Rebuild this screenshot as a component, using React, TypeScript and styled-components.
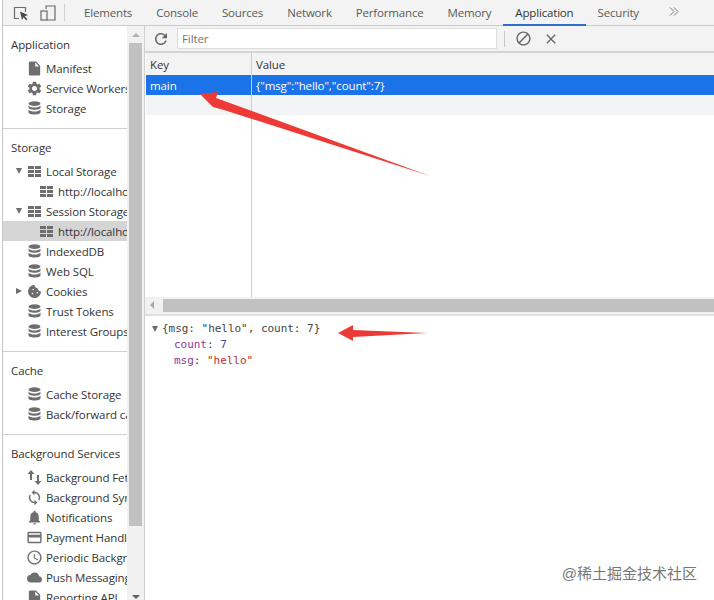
import styled, { createGlobalStyle } from "styled-components";
import type { ReactNode } from "react";
import {
  MdBlock,
  MdClose,
  MdCloud,
  MdCreditCard,
  MdInsertDriveFile,
  MdNotifications,
  MdOutlineAccessTime,
  MdRefresh,
  MdSettings,
  MdSync,
} from "react-icons/md";
import { FaCookieBite } from "react-icons/fa";

const UI_FONT = `"Open Sans", "Noto Sans", sans-serif`;
const MONO_FONT = `"DejaVu Sans Mono", "Liberation Mono", monospace`;

const GlobalStyle = createGlobalStyle`
  html, body {
    margin: 0;
    padding: 0;
    background: #fff;
  }
  * {
    box-sizing: border-box;
  }
`;

const Page = styled.div`
  position: relative;
  width: 714px;
  height: 600px;
  overflow: hidden;
  background: #fff;
  font-family: ${UI_FONT};
  font-size: 11.5px;
  letter-spacing: -0.1px;
  color: #333;
  padding-left: 3px;
  display: flex;
  flex-direction: column;
  &::before {
    content: "";
    position: absolute;
    left: 2px;
    top: 0;
    bottom: 0;
    width: 1px;
    background: #c8c8c8;
  }
`;

const TabBar = styled.div`
  height: 26px;
  flex: none;
  background: #f3f3f3;
  border-bottom: 1px solid #cbcbcb;
  display: flex;
  align-items: stretch;
`;

const TabTools = styled.div`
  width: 62px;
  flex: none;
  margin-right: 7px;
  padding-left: 10px;
  display: flex;
  align-items: center;
  gap: 11px;
  border-right: 1px solid #d0d0d0;
  margin-top: 4px;
  margin-bottom: 4px;
`;

const Tab = styled.div<{ $active?: boolean }>`
  padding: 0 12px;
  line-height: 25px;
  height: 26px;
  letter-spacing: -0.17px;
  color: ${(p) => (p.$active ? "#333" : "#5a5a5a")};
  border-bottom: ${(p) => (p.$active ? "2px solid #2f6fc9" : "none")};
`;

const More = styled.div`
  margin-left: 18px;
  padding-top: 7px;
  display: flex;
  align-items: flex-start;
`;

const Body = styled.div`
  flex: 1;
  min-height: 0;
  display: flex;
`;

const Sidebar = styled.div`
  width: 124px;
  flex: none;
  overflow: hidden;
  background: #fff;
  padding-top: 9px;
`;

const SideSection = styled.div<{ $last?: boolean }>`
  padding-bottom: 10px;
  margin-bottom: 9px;
  border-bottom: ${(p) => (p.$last ? "none" : "1px solid #d0d0d0")};
`;

const SideTitle = styled.div`
  height: 20px;
  line-height: 20px;
  padding-left: 8px;
  margin-bottom: 3px;
  color: #333;
  white-space: nowrap;
`;

const SideRow = styled.div<{ $depth?: number; $selected?: boolean }>`
  height: 20px;
  display: flex;
  align-items: center;
  white-space: nowrap;
  overflow: hidden;
  padding-left: ${(p) => (p.$depth === 1 ? 36 : 24)}px;
  background: ${(p) => (p.$selected ? "#d5d5d5" : "transparent")};
  color: #333;
`;

const Caret = styled.span<{ $open?: boolean }>`
  position: absolute;
  margin-left: -11px;
  width: 0;
  height: 0;
  ${(p) =>
    p.$open
      ? `border-left: 3.5px solid transparent; border-right: 3.5px solid transparent; border-top: 6px solid #6e6e6e;`
      : `border-top: 3.5px solid transparent; border-bottom: 3.5px solid transparent; border-left: 6px solid #6e6e6e;`}
`;

const IconSlot = styled.span`
  width: 14px;
  height: 14px;
  flex: none;
  margin-right: 5px;
  display: flex;
  align-items: center;
  justify-content: center;
  color: #6e6e6e;
  font-size: 17px;
  svg {
    flex: none;
  }
`;

const VScroll = styled.div`
  width: 18px;
  flex: none;
  position: relative;
  background: #f1f1f1;
  border-right: 1px solid #cfcfcf;
  padding: 0 2px;
  display: flex;
  flex-direction: column;
  align-items: center;
`;

const ScrollThumb = styled.div`
  width: 100%;
  height: 483px;
  margin-top: 17px;
  background: #c1c1c1;
`;

const ScrollArrow = styled.span<{ $dir: "up" | "down" | "left" }>`
  position: absolute;
  width: 0;
  height: 0;
  ${(p) =>
    p.$dir === "up"
      ? `top: 7px; border-left: 4px solid transparent; border-right: 4px solid transparent; border-bottom: 4px solid #b0b0b0;`
      : p.$dir === "down"
      ? `bottom: 1px; border-left: 4px solid transparent; border-right: 4px solid transparent; border-top: 4px solid #606060;`
      : `left: 5px; top: 4px; border-top: 4px solid transparent; border-bottom: 4px solid transparent; border-right: 4px solid #a8a8a8;`}
`;

const Main = styled.div`
  flex: 1;
  min-width: 0;
  display: flex;
  flex-direction: column;
`;

const Toolbar = styled.div`
  height: 27px;
  flex: none;
  background: #f3f3f3;
  border-bottom: 2px solid #d4d4d4;
  display: flex;
  align-items: center;
  padding-left: 7px;
`;

const ToolIcon = styled.span<{ $gap?: number }>`
  display: flex;
  color: #666;
  margin-right: ${(p) => p.$gap ?? 0}px;
`;

const FilterBox = styled.div`
  width: 320px;
  height: 21px;
  background: #fff;
  border: 1px solid #dcdcdc;
  line-height: 20px;
  padding-left: 4px;
  color: #757575;
`;

const ToolDivider = styled.div`
  width: 1px;
  height: 16px;
  background: #c8c8c8;
  margin: 0 10px 0 7px;
`;

const TableArea = styled.div`
  height: 244px;
  flex: none;
  position: relative;
  background: #fff;
  padding-left: 1px;
`;

const TableRow = styled.div<{ $bg: string; $color?: string; $h: number }>`
  height: ${(p) => p.$h}px;
  background: ${(p) => p.$bg};
  color: ${(p) => p.$color ?? "#333"};
  display: grid;
  grid-template-columns: 106px 1fr;
  align-items: center;
`;

const Cell = styled.div`
  padding-left: 4px;
  white-space: nowrap;
  overflow: hidden;
`;

const ColLine = styled.div`
  position: absolute;
  left: 106px;
  top: 0;
  bottom: 0;
  width: 1px;
  background: #cdcdcd;
`;

const HScroll = styled.div`
  height: 19px;
  flex: none;
  position: relative;
  background: #f1f1f1;
  padding: 2px 0 0 18px;
  border-bottom: 2px solid #e0e0e0;
`;

const HThumb = styled.div`
  height: 13px;
  background: #c1c1c1;
`;

const Preview = styled.div`
  flex: 1;
  padding: 5px 0 0 7px;
  font-family: ${MONO_FONT};
  font-size: 11px;
  letter-spacing: -0.03px;
  line-height: 16px;
  color: #444;
  white-space: pre;
`;

const PreviewHead = styled.div`
  display: flex;
  align-items: center;
  gap: 4px;
`;

const PreviewCaret = styled.span`
  width: 0;
  height: 0;
  border-left: 3.5px solid transparent;
  border-right: 3.5px solid transparent;
  border-top: 6px solid #6e6e6e;
`;

const PreviewProp = styled.div`
  padding-left: 22px;
`;

const PropKey = styled.span`
  color: #8b3a97;
`;

const NumValue = styled.span`
  color: #4a3f99;
`;

const StrValue = styled.span`
  color: #b5302c;
`;

const ArrowLayer = styled.svg`
  position: absolute;
  left: 0;
  top: 0;
  pointer-events: none;
`;

const Watermark = styled.div`
  position: absolute;
  right: 17px;
  top: 565px;
  font-family: "Liberation Sans", "Noto Sans CJK SC", sans-serif;
  font-size: 15px;
  letter-spacing: 0;
  line-height: 18px;
  color: #777;
  white-space: nowrap;
`;

const DbIcon = () => (
  <svg width="13" height="14" viewBox="0 0 13 14" fill="currentColor">
    <ellipse cx="6.5" cy="2.6" rx="6" ry="2.3" />
    <path d="M.5 4.4c1 1.4 3.400 2 6 2s5-.6 6-2v2.100c0 1.300-2.700 2.300-6 2.300s-6-1-6-2.300z" />
    <path d="M.5 8.500c1 1.400 3.400 2 6 2s5-.6 6-2v2.700c0 1.300-2.700 2.300-6 2.300s-6-1-6-2.300z" />
  </svg>
);

const GridIcon = () => (
  <svg width="13" height="11" viewBox="0 0 13 11" fill="currentColor">
    <rect x="0" y="0" width="6" height="3" />
    <rect x="7" y="0" width="6" height="3" />
    <rect x="0" y="4" width="6" height="3" />
    <rect x="7" y="4" width="6" height="3" />
    <rect x="0" y="8" width="6" height="3" />
    <rect x="7" y="8" width="6" height="3" />
  </svg>
);

const FetchIcon = () => (
  <svg width="15" height="15" viewBox="0 0 15 15" fill="currentColor">
    <path d="M4 0 7.500 4H5v6H3V4H.5z" />
    <path d="M11 15 7.500 11H10V5h2v6h2.500z" />
  </svg>
);

interface RowProps {
  icon: ReactNode;
  label: string;
  depth?: number;
  selected?: boolean;
  caret?: "open" | "closed";
}

const Row = ({ icon, label, depth, selected, caret }: RowProps) => (
  <SideRow $depth={depth} $selected={selected}>
    {caret && <Caret $open={caret === "open"} />}
    <IconSlot>{icon}</IconSlot>
    {label}
  </SideRow>
);

const tabs = [
  "Elements",
  "Console",
  "Sources",
  "Network",
  "Performance",
  "Memory",
  "Application",
  "Security",
];

export default function App() {
  return (
    <Page>
      <GlobalStyle />
      <TabBar>
        <TabTools>
          <svg width="16" height="16" viewBox="0 0 16 16" fill="none" stroke="#6a6a6a">
            <path d="M6 13.500H1.500V2.500h11V7" strokeWidth="1.200" />
            <path d="M7 6.500 15 10l-3.300 1.200 2.800 3-1.300 1.100-2.700-3L9 15z" fill="#4a4a4a" stroke="none" />
          </svg>
          <svg width="16" height="16" viewBox="0 0 16 16" fill="none" stroke="#6a6a6a" strokeWidth="1.200">
            <path d="M6 4V1h9v14H7" />
            <rect x="1" y="6" width="6" height="9" />
          </svg>
        </TabTools>
        {tabs.map((tab) => (
          <Tab key={tab} $active={tab === "Application"}>
            {tab}
          </Tab>
        ))}
        <More>
          <svg width="10" height="9" viewBox="0 0 10 9" fill="none" stroke="#777" strokeWidth="1">
            <path d="M1 .5 5 4.500 1 8.500M5 .5l4 4-4 4" />
          </svg>
        </More>
      </TabBar>
      <Body>
        <Sidebar>
          <SideSection>
            <SideTitle>Application</SideTitle>
            <Row icon={<MdInsertDriveFile />} label="Manifest" />
            <Row icon={<MdSettings />} label="Service Workers" />
            <Row icon={<DbIcon />} label="Storage" />
          </SideSection>
          <SideSection>
            <SideTitle>Storage</SideTitle>
            <Row icon={<GridIcon />} label="Local Storage" caret="open" />
            <Row icon={<GridIcon />} label="http://localhost:3000" depth={1} />
            <Row icon={<GridIcon />} label="Session Storage" caret="open" />
            <Row icon={<GridIcon />} label="http://localhost:3000" depth={1} selected />
            <Row icon={<DbIcon />} label="IndexedDB" />
            <Row icon={<DbIcon />} label="Web SQL" />
            <Row icon={<FaCookieBite size={13} />} label="Cookies" caret="closed" />
            <Row icon={<DbIcon />} label="Trust Tokens" />
            <Row icon={<DbIcon />} label="Interest Groups" />
          </SideSection>
          <SideSection>
            <SideTitle>Cache</SideTitle>
            <Row icon={<DbIcon />} label="Cache Storage" />
            <Row icon={<DbIcon />} label="Back/forward cache" />
          </SideSection>
          <SideSection $last>
            <SideTitle>Background Services</SideTitle>
            <Row icon={<FetchIcon />} label="Background Fetch" />
            <Row icon={<MdSync />} label="Background Sync" />
            <Row icon={<MdNotifications />} label="Notifications" />
            <Row icon={<MdCreditCard />} label="Payment Handler" />
            <Row icon={<MdOutlineAccessTime />} label="Periodic Background Sync" />
            <Row icon={<MdCloud size={15} />} label="Push Messaging" />
            <Row icon={<MdInsertDriveFile />} label="Reporting API" />
          </SideSection>
        </Sidebar>
        <VScroll>
          <ScrollArrow $dir="up" />
          <ScrollThumb />
          <ScrollArrow $dir="down" />
        </VScroll>
        <Main>
          <Toolbar>
            <ToolIcon $gap={7}>
              <MdRefresh size={18} />
            </ToolIcon>
            <FilterBox>Filter</FilterBox>
            <ToolDivider />
            <ToolIcon $gap={11}>
              <MdBlock size={17} />
            </ToolIcon>
            <ToolIcon>
              <MdClose size={16} />
            </ToolIcon>
          </Toolbar>
          <TableArea>
            <ColLine />
            <TableRow $bg="#f3f3f3" $h={22}>
              <Cell>Key</Cell>
              <Cell>Value</Cell>
            </TableRow>
            <TableRow $bg="#1a73e8" $color="#fff" $h={20}>
              <Cell>main</Cell>
              <Cell>{'{"msg":"hello","count":7}'}</Cell>
            </TableRow>
            <TableRow $bg="#f2f4f6" $h={20} />
          </TableArea>
          <HScroll>
            <ScrollArrow $dir="left" />
            <HThumb />
          </HScroll>
          <Preview>
            <PreviewHead>
              <PreviewCaret />
              {'{msg: "hello", count: 7}'}
            </PreviewHead>
            <PreviewProp>
              <PropKey>count</PropKey>: <NumValue>7</NumValue>
            </PreviewProp>
            <PreviewProp>
              <PropKey>msg</PropKey>: <StrValue>"hello"</StrValue>
            </PreviewProp>
          </Preview>
        </Main>
      </Body>
      <ArrowLayer width="714" height="600" viewBox="0 0 714 600">
        <path d="M200 94 218 92 216 98 430 176 224 110 213 107z" fill="#ee3a36" />
        <path d="M338 333 353 325 353 330 427 333 353 337 353 341z" fill="#ee3a36" />
      </ArrowLayer>
      <Watermark>@稀土掘金技术社区</Watermark>
    </Page>
  );
}
